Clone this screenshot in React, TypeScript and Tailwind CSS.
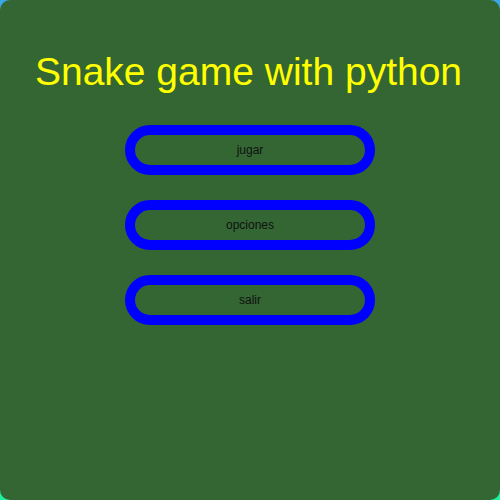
export default function App() {
  const items = ["jugar", "opciones", "salir"];
  return (
    <div className="w-[500px] h-[500px] bg-gradient-to-b from-[#3aa8e8] to-[#20f0a0]">
      <div
        className="w-full h-full rounded-[10px] bg-[#336633] flex flex-col items-center"
        style={{ fontFamily: '"Liberation Sans", Arial, sans-serif' }}
      >
        <h1 className="mt-[52px] text-[39px] leading-[39px] text-[#ffff00] ml-[-3px]">
          Snake game with python
        </h1>
        <div className="mt-[34px] flex flex-col gap-[25px]">
          {items.map((t) => (
            <div
              key={t}
              className="w-[250px] h-[50px] rounded-full border-[10px] border-[#0000ff] flex items-center justify-center text-[12px] text-[#111111]"
            >
              {t}
            </div>
          ))}
        </div>
      </div>
    </div>
  );
}
